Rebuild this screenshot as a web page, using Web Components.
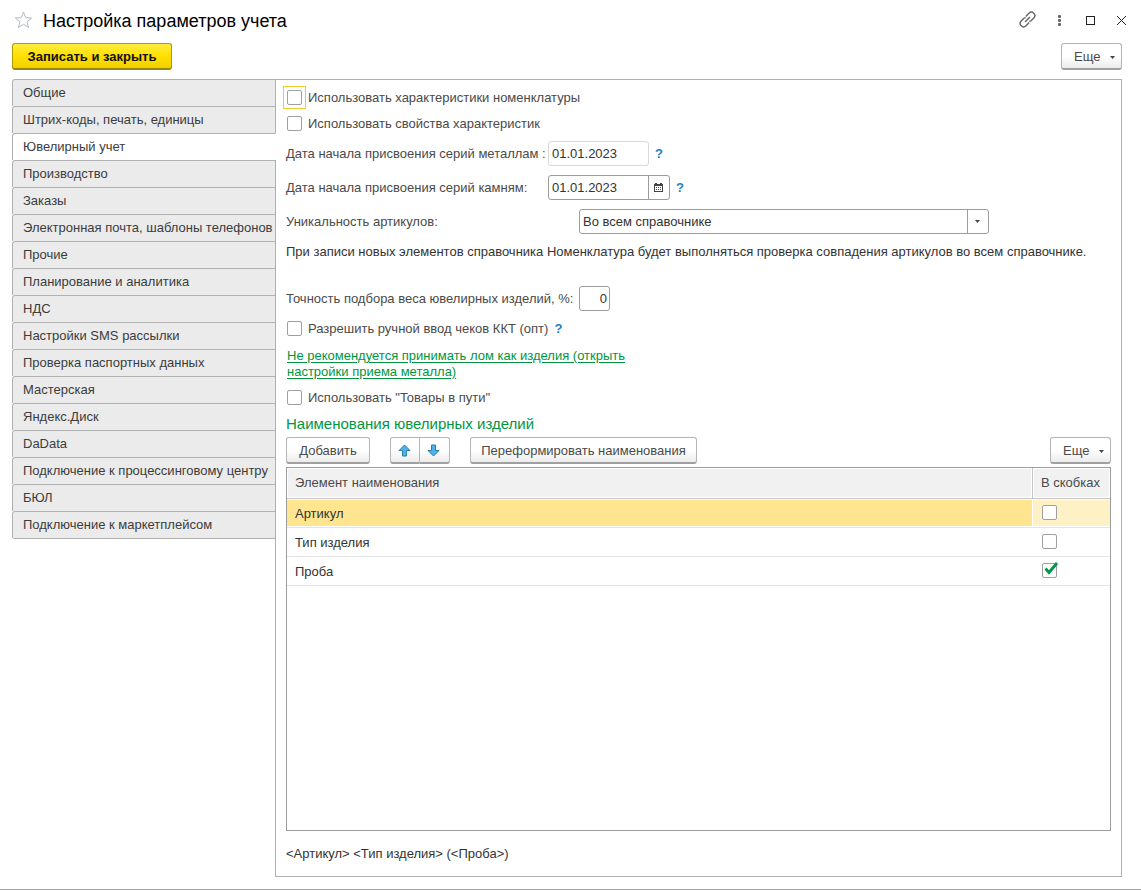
<!DOCTYPE html>
<html lang="ru">
<head>
<meta charset="utf-8">
<meta name="viewport" content="width=device-width, initial-scale=1">
<title>Настройка параметров учета</title>
<style>
  html { height: 100%; }
  body {
    margin: 0;
    min-height: 100%;
    display: flex;
    background: #fff;
    color: #4a4a4a;
    font: 13px/16px "Liberation Sans", Arial, sans-serif;
  }
  settings-window { flex: 1; min-width: 0; }
</style>
</head>
<body>
<settings-window></settings-window>

<template id="tpl-window">
  <style>
    :host { display: flex; flex-direction: column; box-sizing: border-box; min-height: 100vh; border-bottom: 1px solid #a6a6a6; }
    .commands { display: flex; justify-content: space-between; padding: 0 19px 0 12px; }
    main { flex: 1; display: flex; align-items: flex-start; padding: 9px 19px 12px 12px; }
    side-tabs { width: 264px; flex: none; margin-right: -1px; }
    settings-panel { flex: 1; min-width: 0; align-self: stretch; }
  </style>
  <title-bar>Настройка параметров учета</title-bar>
  <div class="commands">
    <cmd-button kind="primary">Записать и закрыть</cmd-button>
    <cmd-button kind="menu">Еще</cmd-button>
  </div>
  <main>
    <side-tabs>
      <side-tab>Общие</side-tab>
      <side-tab>Штрих-коды, печать, единицы</side-tab>
      <side-tab selected>Ювелирный учет</side-tab>
      <side-tab>Производство</side-tab>
      <side-tab>Заказы</side-tab>
      <side-tab>Электронная почта, шаблоны телефонов</side-tab>
      <side-tab>Прочие</side-tab>
      <side-tab>Планирование и аналитика</side-tab>
      <side-tab>НДС</side-tab>
      <side-tab>Настройки SMS рассылки</side-tab>
      <side-tab>Проверка паспортных данных</side-tab>
      <side-tab>Мастерская</side-tab>
      <side-tab>Яндекс.Диск</side-tab>
      <side-tab>DaData</side-tab>
      <side-tab>Подключение к процессинговому центру</side-tab>
      <side-tab>БЮЛ</side-tab>
      <side-tab>Подключение к маркетплейсом</side-tab>
    </side-tabs>
    <settings-panel></settings-panel>
  </main>
</template>

<template id="tpl-title">
  <style>
    :host { display: flex; align-items: center; height: 43px; box-sizing: border-box; padding: 0 12px 3px 14px; color: #000; }
    h1 { flex: 1; margin: 0 0 0 10px; padding-top: 2px; font-size: 18px; line-height: 24px; font-weight: 400; }
    button { border: 0; padding: 0; background: none; display: block; height: 20px; }
    svg { display: block; }
    .tools { display: flex; align-items: center; gap: 15px; }
  </style>
  <button aria-label="Избранное"><svg width="19" height="20" viewBox="0 0 19 20"><path d="M9.500 2l2.200 5.700 6 .3-4.700 3.800 1.600 5.700-5.100-3.200-5.100 3.200L6 11.800 1.300 8l6-.3z" fill="none" stroke="#b3bac1"/></svg></button>
  <h1><slot></slot></h1>
  <div class="tools">
    <button aria-label="Ссылка"><svg width="18" height="20" viewBox="0 0 18 20"><g transform="translate(8.500 9.500) rotate(-45)" fill="none" stroke="#666" stroke-width="1.400"><path d="M-1 3.400H-5.500a3.400 3.400 0 0 1 0-6.800h3.500a3.400 3.400 0 0 1 2 .8M1-3.400H5.500a3.400 3.400 0 0 1 0 6.800H2a3.400 3.400 0 0 1-2-.8M-3.500 0h7"/></g></svg></button>
    <button aria-label="Меню"><svg width="17" height="20" viewBox="0 0 17 20"><g fill="#666"><rect x="6" y="5" width="3" height="3" rx="1"/><rect x="6" y="9" width="3" height="3" rx="1"/><rect x="6" y="13" width="3" height="3" rx="1"/></g></svg></button>
    <button aria-label="Развернуть"><svg width="15" height="20" viewBox="0 0 15 20"><rect x="2.500" y="6.500" width="8" height="8" fill="none" stroke="#222"/></svg></button>
    <button aria-label="Закрыть"><svg width="15" height="20" viewBox="0 0 15 20"><path d="M3 6l9 9M12 6l-9 9" stroke="#222" fill="none"/></svg></button>
  </div>
</template>

<template id="tpl-button">
  <style>
    :host { display: block; }
    button {
      display: flex; align-items: center; justify-content: center;
      box-sizing: border-box; width: 100%; height: 27px; padding: 2px 13px 0;
      font: inherit; color: #4a4a4a; white-space: nowrap;
      border: 1px solid #b5b5b5; border-bottom: 2px solid #a0a0a0; border-radius: 3px;
      background: linear-gradient(#fff 50%, #ececec);
    }
    svg { display: none; margin-left: 6px; }
    :host([kind="menu"]) { width: 61px; }
    :host([kind="menu"]) button { padding: 2px 6px 0 12px; justify-content: space-between; }
    :host([kind="menu"]) svg { display: block; }
    :host([kind="primary"]) { width: 160px; }
    :host([kind="primary"]) button {
      color: #111; font-weight: 700; padding: 2px 0 0;
      border-color: #b09c00; border-bottom-color: #9a8800;
      background: linear-gradient(#ffec42, #ffe000 50%, #f2d000);
    }
    :host([join="start"]) button { border-radius: 3px 0 0 3px; padding: 0 2px 0 0; }
    :host([join="end"]) button { border-radius: 0 3px 3px 0; padding: 0 2px 0 0; border-left: 0; }
  </style>
  <button type="button"><slot></slot><svg width="5" height="3" viewBox="0 0 5 3"><path d="M0 0h5L2.500 3z" fill="#444"/></svg></button>
</template>

<template id="tpl-tabs">
  <style>
    :host { display: block; border-bottom: 1px solid #b0b0b0; border-radius: 0 0 0 3px; }
  </style>
  <slot></slot>
</template>

<template id="tpl-tab">
  <style>
    :host { display: block; }
    button {
      display: block; box-sizing: border-box; width: 100%; height: 27px; padding: 0 0 1px 10px;
      text-align: left; font: inherit; color: #3c3c3c; white-space: nowrap;
      border: 1px solid #b0b0b0; border-bottom: 0; border-radius: 3px 0 0 0; background: #ebebeb;
    }
    :host([selected]) button { background: #fff; border-right-color: #fff; position: relative; }
  </style>
  <button type="button" role="tab"><slot></slot></button>
</template>

<template id="tpl-check">
  <style>
    :host { display: flex; align-items: center; height: 25px; }
    .box { position: relative; width: 15px; height: 15px; flex: none; }
    input { appearance: none; display: block; box-sizing: border-box; width: 15px; height: 15px; margin: 0; border: 1px solid #a0a0a0; border-radius: 2px; background: #fff; outline: 0; }
    label { margin-left: 6px; }
    svg { display: none; position: absolute; left: 0; top: -2px; pointer-events: none; }
    input:checked + svg { display: block; }
    :host([framed]) .box::before { content: ""; position: absolute; inset: -4px; border: 1px solid #f5c92f; }
    :host([bare]) label { display: none; }
    :host([bare]) { height: 28px; box-sizing: border-box; align-items: flex-start; padding-top: 6px; }
  </style>
  <span class="box"><input type="checkbox" id="c"><svg width="17" height="17" viewBox="0 0 17 17"><path d="M3.500 7.500l3.500 4 8-9.500" fill="none" stroke="#009646" stroke-width="2.800"/></svg></span>
  <label for="c"><slot></slot></label>
</template>

<template id="tpl-hint">
  <style>
    :host { display: inline-block; }
    button { border: 0; padding: 0; background: none; font: inherit; font-weight: 700; color: #1a7fc4; display: block; }
  </style>
  <button type="button" aria-label="Справка">?</button>
</template>

<template id="tpl-field">
  <style>
    :host { display: flex; align-items: center; height: 25px; }
    label { width: var(--label-width, 262px); flex: none; white-space: nowrap; }
    .frame { display: flex; box-sizing: border-box; height: 25px; width: var(--field-width, 101px); border: 1px solid #9c9c9c; border-radius: 3px; background: #fff; overflow: hidden; }
    input, select { appearance: none; flex: 1; min-width: 0; box-sizing: border-box; border: 0; margin: 0; padding: 0 3px; background: none; font: inherit; color: #333; outline: 0; border-radius: 0; }
    .pick { display: flex; align-items: center; justify-content: center; width: 21px; flex: none; padding: 0 1px 0 0; border: 0; border-left: 1px solid #9c9c9c; background: none; box-sizing: border-box; }
    :host([readonly]) .frame { border-color: #d9d9d9; }
    :host([type="number"]) input { text-align: right; padding: 0 2px; }
    help-hint { margin-left: 6px; }
  </style>
  <label for="f"></label>
  <div class="frame"></div>
</template>

<template id="tpl-panel">
  <style>
    :host { display: flex; flex-direction: column; box-sizing: border-box; border: 1px solid #b0b0b0; padding: 5px 10px 10px; }
    check-field { padding-left: 1px; }
    check-field + check-field { margin-top: 1px; }
    .dates { display: grid; gap: 9px; margin: 5px 0; }
    .dates > :last-child { --label-width: 293px; --field-width: 410px; }
    .dates > :nth-child(2) { --field-width: 122px; }
    .note { margin: 0; line-height: 25px; color: #333; }
    .precision { --label-width: 293px; --field-width: 31px; margin: 22px 0 5px; }
    .inline { display: flex; align-items: center; gap: 6px; }
    .link { margin: 7px 0 5px; padding-left: 1px; max-width: 345px; }
    a { color: #00963f; text-decoration: underline; text-underline-offset: 2px; }
    h2 { margin: 2px 0 1px; font-size: 15px; line-height: 24px; font-weight: 400; color: #00963f; }
    .bar { display: flex; gap: 20px; margin-bottom: 3px; }
    .pair { display: flex; width: 60px; }
    .pair > * { flex: 1; }
    .more { margin-left: auto; }
    .add { width: 84px; }
    .reformat { width: 227px; }
    svg { display: block; }
    names-table { flex: 1; min-height: 200px; }
    .result { margin: 10px 0 0; line-height: 25px; color: #333; }
  </style>
  <check-field framed>Использовать характеристики номенклатуры</check-field>
  <check-field>Использовать свойства характеристик</check-field>
  <div class="dates">
    <form-field type="text" readonly hint label="Дата начала присвоения серий металлам :" value="01.01.2023"></form-field>
    <form-field type="date" hint label="Дата начала присвоения серий камням:" value="01.01.2023"></form-field>
    <form-field type="select" label="Уникальность артикулов:" value="Во всем справочнике"></form-field>
  </div>
  <p class="note">При записи новых элементов справочника Номенклатура будет выполняться проверка совпадения артикулов во всем справочнике.</p>
  <form-field class="precision" type="number" label="Точность подбора веса ювелирных изделий, %:" value="0"></form-field>
  <div class="inline"><check-field>Разрешить ручной ввод чеков ККТ (опт)</check-field><help-hint></help-hint></div>
  <div class="link"><a href="#metal">Не рекомендуется принимать лом как изделия (открыть настройки приема металла)</a></div>
  <check-field>Использовать "Товары в пути"</check-field>
  <h2>Наименования ювелирных изделий</h2>
  <div class="bar">
    <cmd-button class="add">Добавить</cmd-button>
    <div class="pair">
      <cmd-button join="start"><svg role="img" aria-label="Вверх" width="13" height="13" viewBox="0 0 13 13"><path d="M6.500 1l5.500 5.500H8.500v5.500h-4V6.500H1z" fill="#4db1ea" stroke="#2a7dab"/></svg></cmd-button>
      <cmd-button join="end"><svg role="img" aria-label="Вниз" width="13" height="13" viewBox="0 0 13 13"><path d="M6.500 12l5.500-5.500H8.500V1h-4v5.500H1z" fill="#4db1ea" stroke="#2a7dab"/></svg></cmd-button>
    </div>
    <cmd-button class="reformat">Переформировать наименования</cmd-button>
    <cmd-button class="more" kind="menu">Еще</cmd-button>
  </div>
  <names-table></names-table>
  <p class="result">&lt;Артикул&gt; &lt;Тип изделия&gt; (&lt;Проба&gt;)</p>
</template>

<template id="tpl-table">
  <style>
    :host { display: block; box-sizing: border-box; border: 1px solid #9c9c9c; background: #fff; }
    table { width: 100%; border-collapse: separate; border-spacing: 0; table-layout: fixed; }
    th, td { box-sizing: border-box; padding: 0 8px; text-align: left; font-weight: 400; white-space: nowrap; }
    th { height: 31px; background: #f1f1f1; border-bottom: 1px solid #c4c4c4; box-shadow: inset 0 0 0 1px #fff; }
    th:first-child { border-right: 1px solid #c4c4c4; }
    th:last-child, td:last-child { width: 77px; }
    td { height: 29px; padding-top: 2px; border-bottom: 1px solid #e4e4e4; color: #333; }
    td:last-child { padding: 0 8px 0 9px; }
    tr.current td { background: #fff1c6; box-shadow: inset 0 1px #fff, inset 0 -1px #fff; }
    tr.current td:first-child { background: #ffe58f; border-right: 1px solid #fff; }
  </style>
  <table>
    <thead><tr><th>Элемент наименования</th><th>В скобках</th></tr></thead>
    <tbody>
      <tr class="current"><td>Артикул</td><td><check-field bare>Артикул в скобках</check-field></td></tr>
      <tr><td>Тип изделия</td><td><check-field bare>Тип изделия в скобках</check-field></td></tr>
      <tr><td>Проба</td><td><check-field bare checked>Проба в скобках</check-field></td></tr>
    </tbody>
  </table>
</template>

<script>
  class TemplateElement extends HTMLElement {
    constructor() {
      super();
      const root = this.attachShadow({ mode: "open" });
      root.append(document.getElementById(this.constructor.template).content.cloneNode(true));
    }
  }

  class CmdButton extends TemplateElement { static template = "tpl-button"; }
  class HelpHint extends TemplateElement { static template = "tpl-hint"; }
  class TitleBar extends TemplateElement { static template = "tpl-title"; }

  class SideTab extends TemplateElement {
    static template = "tpl-tab";
    connectedCallback() {
      this.shadowRoot.querySelector("button").setAttribute("aria-selected", this.hasAttribute("selected"));
    }
  }

  class SideTabs extends TemplateElement {
    static template = "tpl-tabs";
    connectedCallback() {
      this.setAttribute("role", "tablist");
      this.addEventListener("click", (event) => {
        const tab = event.target.closest("side-tab");
        if (!tab) return;
        for (const item of this.children) {
          item.toggleAttribute("selected", item === tab);
          item.connectedCallback();
        }
      });
    }
  }

  class CheckField extends TemplateElement {
    static template = "tpl-check";
    connectedCallback() {
      const input = this.shadowRoot.querySelector("input");
      input.checked = this.hasAttribute("checked");
      // In table cells the caption is not drawn, so it becomes the accessible name.
      if (this.hasAttribute("bare")) input.setAttribute("aria-label", this.textContent);
    }
  }

  class FormField extends TemplateElement {
    static template = "tpl-field";
    connectedCallback() {
      const root = this.shadowRoot;
      const frame = root.querySelector(".frame");
      const type = this.getAttribute("type");
      const value = this.getAttribute("value");
      root.querySelector("label").textContent = this.getAttribute("label");
      if (type === "select") {
        frame.innerHTML = `<select id="f"><option>${value}</option></select>
          <span class="pick"><svg width="5" height="3" viewBox="0 0 5 3"><path d="M0 0h5L2.500 3z" fill="#444"/></svg></span>`;
      } else {
        frame.innerHTML = `<input id="f" type="text" value="${value}">`;
        root.querySelector("input").readOnly = this.hasAttribute("readonly");
      }
      if (type === "date") {
        frame.insertAdjacentHTML("beforeend", `<button class="pick" type="button" aria-label="Выбрать дату">
          <svg width="9" height="11" viewBox="0 0 9 11" shape-rendering="crispEdges"><path d="M0 2h1V1h2v1h3V1h2v1h1v8H0z" fill="#444"/><path d="M1 4h7v5H1z" fill="#fff"/><path d="M2 5h1v1H2zM4 5h1v1H4zM6 5h1v1H6zM2 7h1v1H2zM4 7h1v1H4zM6 7h1v1H6z" fill="#444"/></svg></button>`);
      }
      if (this.hasAttribute("hint")) root.append(document.createElement("help-hint"));
    }
  }

  class NamesTable extends TemplateElement { static template = "tpl-table"; }
  class SettingsPanel extends TemplateElement { static template = "tpl-panel"; }
  class SettingsWindow extends TemplateElement { static template = "tpl-window"; }

  customElements.define("cmd-button", CmdButton);
  customElements.define("help-hint", HelpHint);
  customElements.define("title-bar", TitleBar);
  customElements.define("side-tab", SideTab);
  customElements.define("side-tabs", SideTabs);
  customElements.define("check-field", CheckField);
  customElements.define("form-field", FormField);
  customElements.define("names-table", NamesTable);
  customElements.define("settings-panel", SettingsPanel);
  customElements.define("settings-window", SettingsWindow);
</script>
</body>
</html>
